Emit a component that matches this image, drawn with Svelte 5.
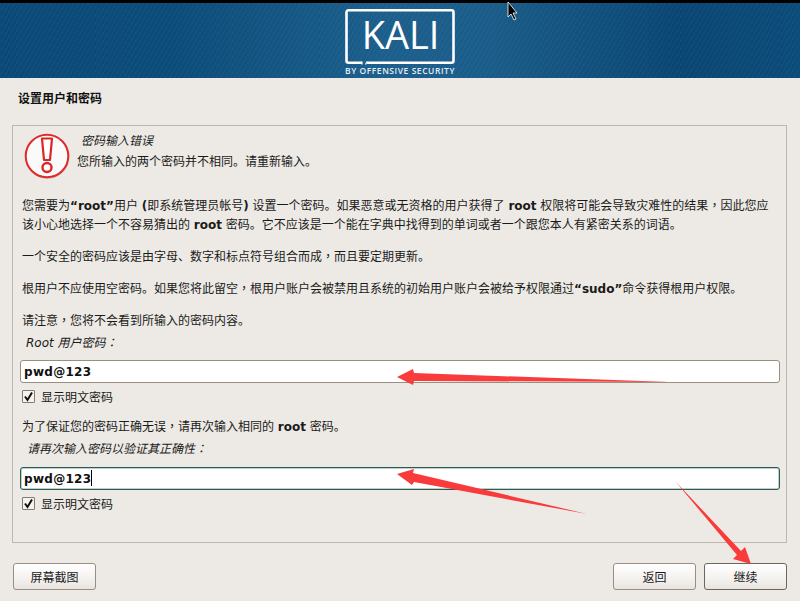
<script>
	const checkLabel = '显示明文密码';
</script>

<div class="page">
	<header class="banner">
		<svg class="logo" width="112" height="68" viewBox="0 0 112 68">
			<path d="M17 54.700H3.500a2 2 0 0 1-2-2V4.300a2 2 0 0 1 2-2h103a2 2 0 0 1 2 2v48.400a2 2 0 0 1-2 2H22" fill="none" stroke="#fff" stroke-width="2.600" />
			<path d="M17 53.500v3M22 53.500l-1.500 3" fill="none" stroke="#fff" stroke-width="1.200" />
			<text class="logo-word" x="55.500" y="41" text-anchor="middle">KALI</text>
			<text class="logo-sub" x="55" y="65.500" text-anchor="middle">BY OFFENSIVE SECURITY</text>
		</svg>
	</header>

	<main class="content">
		<h1 class="title">设置用户和密码</h1>

		<section class="panel">
			<div class="error">
				<svg class="error__icon" width="46" height="46" viewBox="0 0 46 46">
					<circle cx="23.500" cy="24" r="22" fill="#c9c5c0" />
					<circle cx="23" cy="23" r="21.300" fill="#fbfafa" stroke="#e02a2a" stroke-width="2" />
					<path d="M18 5.500h10l-2 21.500h-6z" fill="#fff" stroke="#d92626" stroke-width="2.200" stroke-linejoin="round" />
					<circle cx="23" cy="34.500" r="4.500" fill="#fff" stroke="#d92626" stroke-width="2.400" />
				</svg>
				<div class="error__text">
					<p class="error__title">密码输入错误</p>
					<p>您所输入的两个密码并不相同。请重新输入。</p>
				</div>
			</div>

			<p class="para para--first">您需要为<b>“root”</b>用户 <b>(</b>即系统管理员帐号<b>)</b> 设置一个密码。如果恶意或无资格的用户获得了 <b>root</b> 权限将可能会导致灾难性的结果<span class="mark">，</span>因此您应<br />该小心地选择一个不容易猜出的 <b>root</b> 密码。它不应该是一个能在字典中找得到的单词或者一个跟您本人有紧密关系的词语。</p>
			<p class="para">一个安全的密码应该是由字母、数字和标点符号组合而成<span class="mark">，</span>而且要定期更新。</p>
			<p class="para">根用户不应使用空密码。如果您将此留空<span class="mark">，</span>根用户账户会被禁用且系统的初始用户账户会被给予权限通过<b>“sudo”</b>命令获得根用户权限。</p>
			<p class="para">请注意<span class="mark">，</span>您将不会看到所输入的密码内容。</p>

			<p class="label">Root 用户密码<span class="mark">：</span></p>
			<div class="field">pwd@123</div>
			<div class="check">
				<span class="check__box"><svg width="11" height="11" viewBox="0 0 11 11"><path d="M2 5.500l2.500 3.500L9 1.500" fill="none" stroke="#111" stroke-width="2" /></svg></span>
				{checkLabel}
			</div>

			<p class="para para--confirm">为了保证您的密码正确无误<span class="mark">，</span>请再次输入相同的 <b>root</b> 密码。</p>
			<p class="label label--confirm">请再次输入密码以验证其正确性<span class="mark">：</span></p>
			<div class="field field--focus">pwd@123<span class="caret"></span></div>
			<div class="check">
				<span class="check__box"><svg width="11" height="11" viewBox="0 0 11 11"><path d="M2 5.500l2.500 3.500L9 1.500" fill="none" stroke="#111" stroke-width="2" /></svg></span>
				{checkLabel}
			</div>
		</section>

		<footer class="actions">
			<button class="btn btn--shot">屏幕截图</button>
			<span class="actions__space"></span>
			<button class="btn">返回</button>
			<button class="btn btn--next">继续</button>
		</footer>
	</main>

	<svg class="overlay" width="800" height="601" viewBox="0 0 800 601">
		<path d="M397 377l16-8 1 4 256 9-256-1-1 4z" fill="#f93b3b" />
		<path d="M397 474l17-5-1 4 174 41-173-32-2 3z" fill="#f93b3b" />
		<path d="M675 481l66 70 4-4 6 17-18-5 4-4z" fill="#f93b3b" />
		<path d="M508 2v15l3-3 3 6 2-1-3-6h4z" fill="#000" stroke="#fff" stroke-width="0.800" />
	</svg>
</div>

<style>
	:global(body) {
		margin: 0;
		background: #edeae5;
	}
	.page {
		position: relative;
		width: 800px;
		height: 601px;
		overflow: hidden;
		display: flex;
		flex-direction: column;
		font-family: "DejaVu Sans", "Noto Sans CJK SC", sans-serif;
		font-size: 12px;
		color: #1a1a1a;
	}
	.mark {
		font-family: "Noto Sans CJK TC", sans-serif;
		line-height: 0;
	}
	.banner {
		flex: none;
		border-top: 3px solid #000;
		display: flex;
		justify-content: center;
		align-items: flex-start;
		padding-top: 5px;
		height: 70px;
		background:
			repeating-linear-gradient(120deg, rgba(255, 255, 255, 0.035) 0 1px, transparent 1px 4px),
			linear-gradient(90deg, #0b4a78 0%, #0c4c7a 22%, #1c5f8c 48%, #1b5d8a 60%, #0a4674 85%, #0c4c7a 100%);
	}
	.logo {
		display: block;
		margin-left: 2px;
	}
	.logo-word {
		font-family: "Open Sans", sans-serif;
		font-weight: 400;
		font-size: 38px;
		fill: #fff;
	}
	.logo-sub {
		font-family: "Open Sans", sans-serif;
		font-size: 8.500px;
		font-weight: 600;
		letter-spacing: 0.550px;
		fill: #e3edf3;
	}
	.content {
		flex: 1;
		display: flex;
		flex-direction: column;
		padding: 0 13px 11px 12px;
	}
	.title {
		margin: 13px 0 0 6px;
		font-size: 12px;
		line-height: 16px;
		font-weight: bold;
		color: #111;
	}
	.panel {
		margin-top: 18px;
		height: 418px;
		box-sizing: border-box;
		border: 1px solid #bdb6aa;
		padding: 4px 6px 0 7px;
	}
	p {
		margin: 0;
	}
	.error {
		display: flex;
		align-items: flex-start;
		gap: 7px;
		margin-left: 4px;
		height: 58px;
	}
	.error__icon {
		margin-top: 3px;
		flex: none;
	}
	.error__text {
		line-height: 21px;
		padding-top: 1px;
	}
	.error__title {
		font-style: italic;
		margin-left: 4px;
	}
	.para {
		line-height: 19px;
		margin: 13px 0 0 2px;
		white-space: nowrap;
	}
	.para--first {
		margin-top: 9px;
	}
	.para--confirm {
		margin-top: 14px;
	}
	.label {
		font-style: italic;
		line-height: 18px;
		margin: 3px 0 0 6px;
	}
	.label--confirm {
		margin-left: 7px;
	}
	.field {
		height: 23px;
		line-height: 22px;
		box-sizing: border-box;
		border: 1px solid #9a8e80;
		border-radius: 3px;
		background: #fff;
		margin: 8px 0 0 0;
		padding: 0 3px;
		font-weight: bold;
		font-size: 12px;
		letter-spacing: 0.300px;
		color: #111;
	}
	.field--focus {
		margin-top: 9px;
		border-color: #2e5a52;
		box-shadow: inset 0 0 0 0.500px #7fa59c;
	}
	.caret {
		display: inline-block;
		width: 1px;
		height: 16px;
		background: #000;
		vertical-align: -3px;
	}
	.check {
		display: flex;
		align-items: center;
		gap: 6px;
		height: 16px;
		margin: 5px 0 0 2px;
	}
	.check__box {
		width: 11px;
		height: 11px;
		border: 1px solid #857a6e;
		border-radius: 1px;
		background: #f5f3f0;
		display: block;
	}
	.check__box svg {
		display: block;
	}
	.actions {
		display: flex;
		gap: 8px;
		margin-top: 20px;
	}
	.actions__space {
		flex: 1;
	}
	.btn {
		width: 83px;
		height: 27px;
		padding: 0;
		font: inherit;
		color: #1a1a1a;
		border: 1px solid #9a8e80;
		border-radius: 3px;
		background: linear-gradient(#fff, #f6f4f2 50%, #e8e4e0);
	}
	.btn--shot {
		margin-left: 1px;
	}
	.btn--next {
		border-color: #6f6558;
	}
	.overlay {
		position: absolute;
		inset: 0;
		pointer-events: none;
	}
</style>
